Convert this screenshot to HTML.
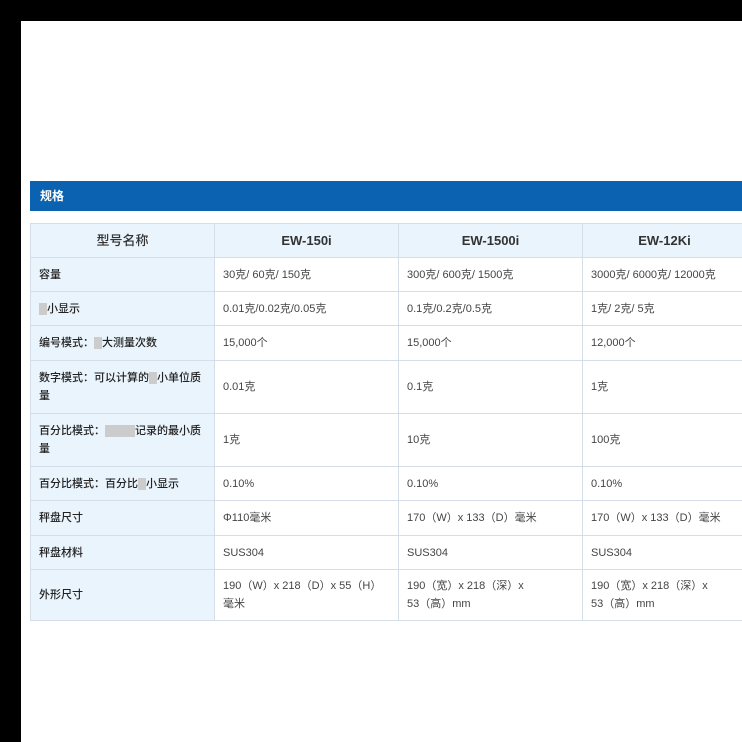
<!DOCTYPE html>
<html><head><meta charset="utf-8"><style>
body{margin:0;width:742px;height:742px;background:#fff;position:relative;overflow:hidden;font-family:"Liberation Sans","Noto Sans CJK SC",sans-serif;}
.top{position:absolute;left:0;top:0;width:742px;height:21px;background:#000}
.left{position:absolute;left:0;top:0;width:21px;height:742px;background:#000}
.bar{position:absolute;left:30px;top:181px;width:712px;height:30px;background:#0a62b0;color:#fff;font-size:12px;font-weight:bold;line-height:30px;padding-left:10px;box-sizing:border-box}
table{position:absolute;left:30px;top:223px;border-collapse:collapse;table-layout:fixed;width:716px}
td{border:1px solid #d5dee8;font-size:11px;color:#444;padding:0 8px;line-height:18px;vertical-align:middle}
td:first-child{background:#eaf4fc;color:#222;font-weight:500}
tr.h td{background:#eaf4fc;text-align:center;font-size:13px;font-weight:bold;color:#333}
tr.h td:first-child{font-weight:500}
.b{display:inline-block;width:8px;height:12px;background:#ccc;vertical-align:middle}
</style></head><body>
<div class="top"></div><div class="left"></div>
<div class="bar">规格</div>
<table>
<colgroup><col style="width:184px"><col style="width:184px"><col style="width:184px"><col style="width:164px"></colgroup>
<tr class="h" style="height:34px"><td>型号名称</td><td>EW-150i</td><td>EW-1500i</td><td>EW-12Ki</td></tr>
<tr style="height:34px"><td>容量</td><td>30克/ 60克/ 150克</td><td>300克/ 600克/ 1500克</td><td>3000克/ 6000克/ 12000克</td></tr>
<tr style="height:34px"><td><span class="b"></span>小显示</td><td>0.01克/0.02克/0.05克</td><td>0.1克/0.2克/0.5克</td><td>1克/ 2克/ 5克</td></tr>
<tr style="height:35px"><td>编号模式：<span class="b"></span>大测量次数</td><td>15,000个</td><td>15,000个</td><td>12,000个</td></tr>
<tr style="height:53px"><td>数字模式：可以计算的<span class="b"></span>小单位质量</td><td>0.01克</td><td>0.1克</td><td>1克</td></tr>
<tr style="height:53px"><td>百分比模式：<span class="b" style="width:30px"></span>记录的最小质量</td><td>1克</td><td>10克</td><td>100克</td></tr>
<tr style="height:34px"><td>百分比模式：百分比<span class="b"></span>小显示</td><td>0.10%</td><td>0.10%</td><td>0.10%</td></tr>
<tr style="height:35px"><td>秤盘尺寸</td><td>Φ110毫米</td><td>170（W）x 133（D）毫米</td><td>170（W）x 133（D）毫米</td></tr>
<tr style="height:34px"><td>秤盘材料</td><td>SUS304</td><td>SUS304</td><td>SUS304</td></tr>
<tr style="height:51px"><td>外形尺寸</td><td>190（W）x 218（D）x 55（H）毫米</td><td>190（宽）x 218（深）x<br>53（高）mm</td><td>190（宽）x 218（深）x<br>53（高）mm</td></tr>
</table>
</body></html>
